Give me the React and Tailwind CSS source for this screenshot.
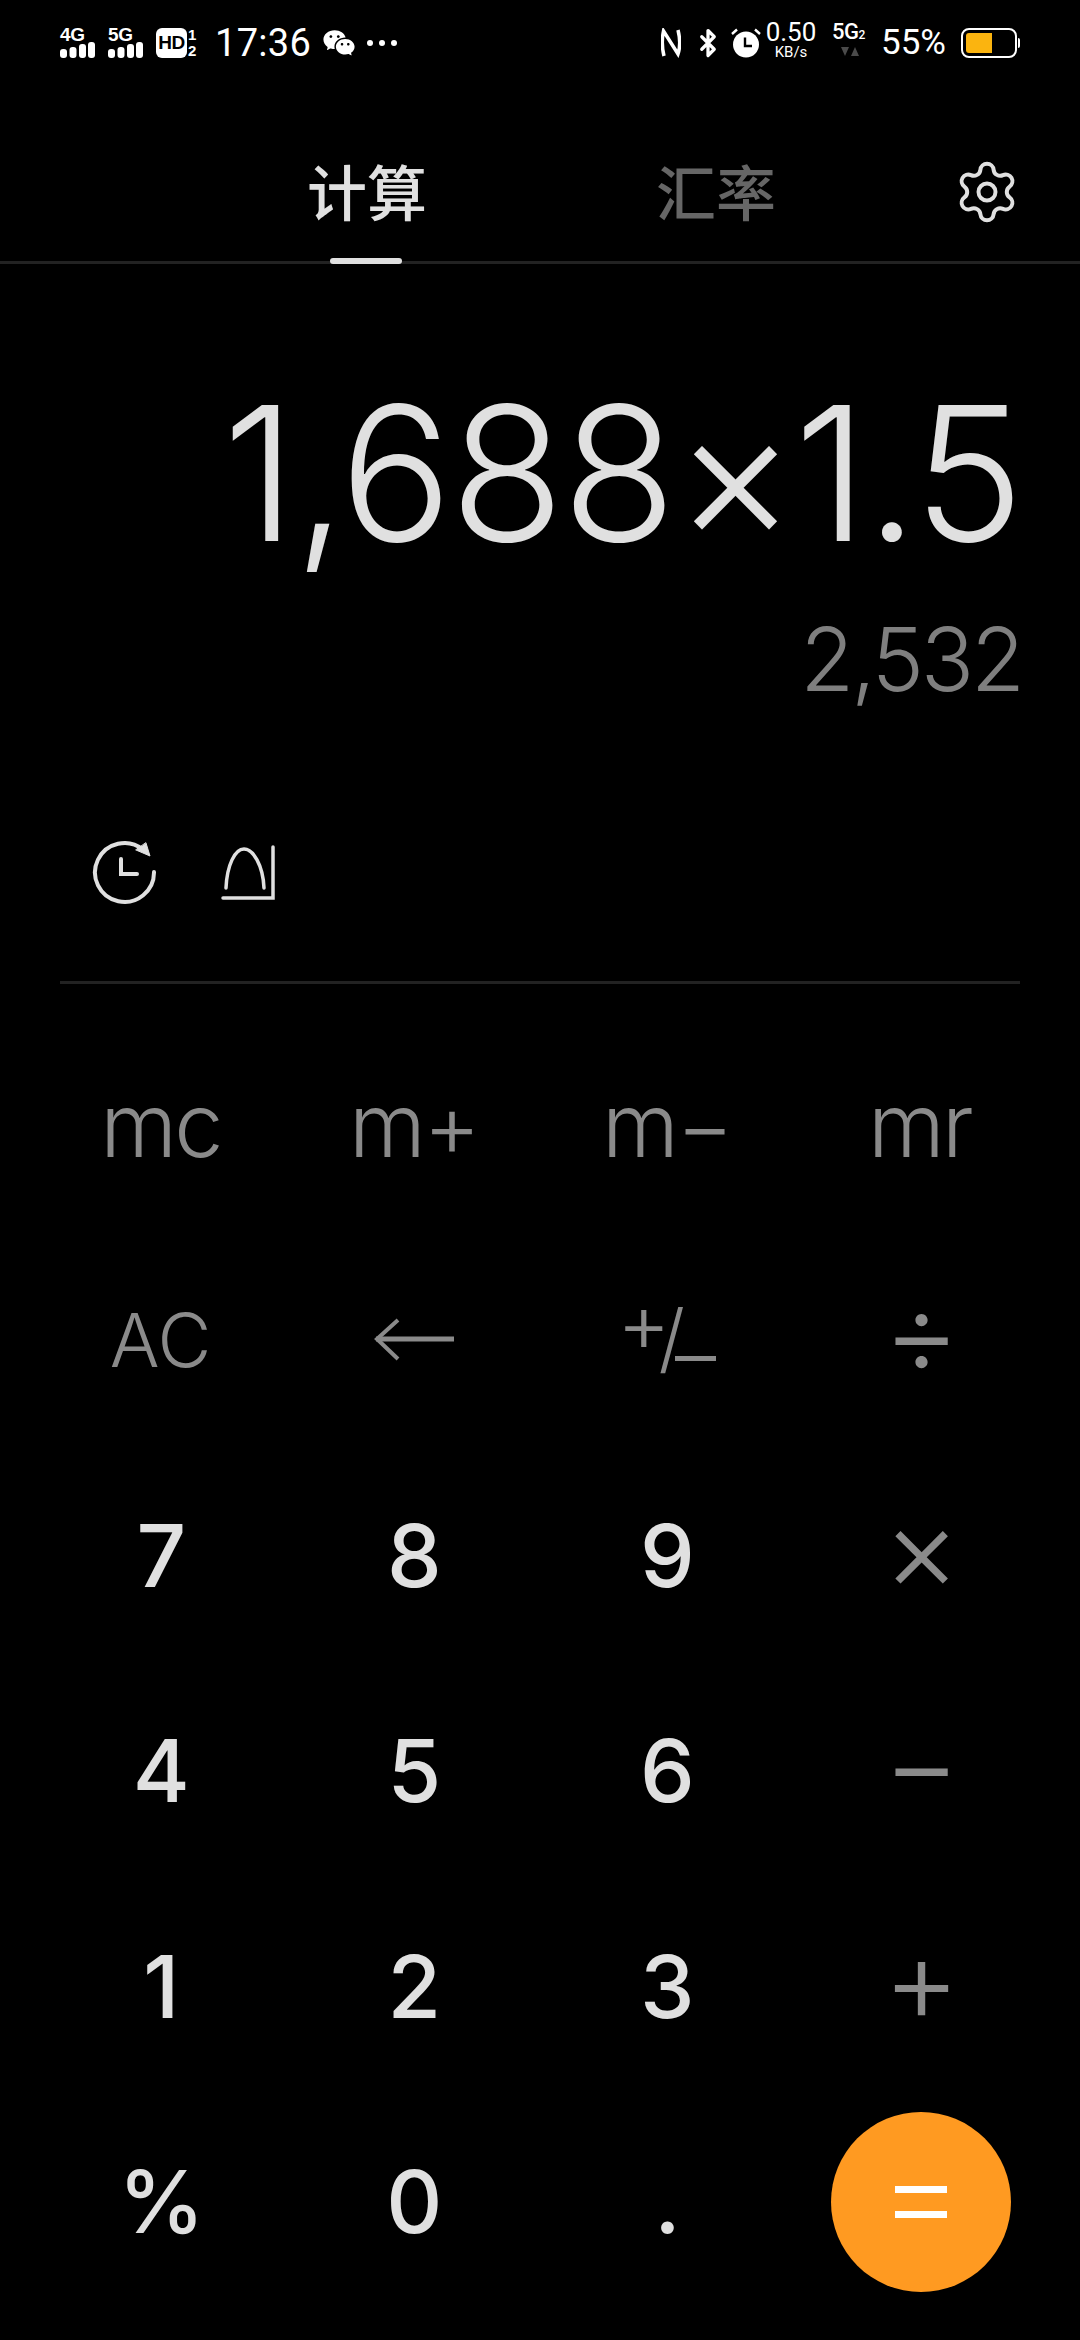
import { Settings, Bluetooth } from "lucide-react";
import { RiWechatFill } from "react-icons/ri";

const SANS = "font-['Inter','Noto_Sans_CJK_SC',sans-serif]";

function Signal({ label }) {
  return (
    <div className="flex flex-col w-[35px] h-[30px] justify-between">
      <span className="font-['Liberation_Sans',sans-serif] font-bold text-[19px] leading-[13px] tracking-[-0.3px] text-white">{label}</span>
      <svg width="35" height="16" viewBox="0 0 35 16" fill="#fff">
        <rect x="0" y="7" width="7" height="9" rx="3" />
        <rect x="9.5" y="5" width="7" height="11" rx="3" />
        <rect x="19" y="2" width="7" height="14" rx="3" />
        <rect x="28" y="0" width="7" height="16" rx="3" />
      </svg>
    </div>
  );
}

function StatusBar() {
  return (
    <div className="flex items-center h-[84px] pl-[60px] pt-[1px] text-white font-['Roboto',sans-serif]">
      <Signal label="4G" />
      <div className="ml-[13px]"><Signal label="5G" /></div>
      <div className="ml-[13px] w-[31px] h-[30px] rounded-[6px] bg-white flex items-center justify-center">
        <span className="font-['Liberation_Sans',sans-serif] font-bold text-[19px] leading-none tracking-[-0.5px] text-black">HD</span>
      </div>
      <div className="ml-[1px] w-[10px] h-[30px] flex flex-col justify-between font-['Liberation_Sans',sans-serif] font-bold text-[15px] leading-[14px]">
        <span>1</span>
        <span>2</span>
      </div>
      <span className="ml-[17px] w-[94px] text-[38px] leading-none font-normal tracking-[0.3px]">17:36</span>
      <RiWechatFill className="ml-[13px] w-[34px] h-[34px]" />
      <div className="ml-[11px] flex gap-[6px]">
        <div className="w-[6px] h-[6px] rounded-full bg-white" />
        <div className="w-[6px] h-[6px] rounded-full bg-white" />
        <div className="w-[6px] h-[6px] rounded-full bg-white" />
      </div>

      <svg className="ml-[264px]" width="20" height="30" viewBox="0 0 20 30" fill="none" stroke="#fff" strokeWidth="3.5">
        <path d="M3 28 C1 20 1 10 2.5 3 L17 26 C19 20 19 10 17 2" />
      </svg>
      <Bluetooth className="ml-[12px] w-[30px] h-[30px]" strokeWidth={2.6} />
      <svg className="ml-[8px]" width="30" height="30" viewBox="0 0 30 30" fill="#fff">
        <circle cx="15" cy="16.5" r="13" />
        <path d="M14 9.5v8.5h7" fill="none" stroke="#000" strokeWidth="2.4" />
        <path d="M1 6 L6 1.5 M29 6 L24 1.5" stroke="#fff" strokeWidth="2.4" />
      </svg>
      <div className="ml-[4px] w-[52px] flex flex-col items-center">
        <span className="text-[26px] leading-[20px] mt-[-4px]">0.50</span>
        <span className="text-[15px] leading-[14px] mt-[3px]">KB/s</span>
      </div>
      <div className="ml-[15px] w-[38px] flex flex-col items-start">
        <span className="text-[22px] leading-[18px] font-medium mt-[-6px] tracking-[-0.5px] whitespace-nowrap">5G<span className="text-[12px]">2</span></span>
        <svg className="ml-[9px] mt-[3px]" width="18" height="10" viewBox="0 0 18 10" fill="#4a4a4a">
          <path d="M0 0h8L4 9zM10 9h8L14 0z" />
        </svg>
      </div>
      <span className="ml-[11px] w-[68px] text-[35px] leading-none whitespace-nowrap">55%</span>
      <div className="ml-[12px] flex items-center">
        <div className="w-[56px] h-[30px] rounded-[8px] border-2 border-white p-[3px]">
          <div className="w-[26px] h-full bg-[#fbb40f] rounded-l-[3px]" />
        </div>
        <div className="ml-[1px] w-[2px] h-[10px] bg-white rounded-r-sm" />
      </div>
    </div>
  );
}

function Tabs() {
  return (
    <div className={`relative h-[180px] border-b-[3px] border-[#222222] ${SANS}`}>
      <div className="flex pl-[307px] pt-[68px]">
        <span className="text-[60px] leading-[84px] font-medium whitespace-nowrap text-[#e0e0e0]">计算</span>
        <span className="ml-[229px] text-[60px] leading-[84px] font-medium whitespace-nowrap text-[#666666]">汇率</span>
        <Settings className="ml-[177px] mt-[6px] w-[68px] h-[68px] text-[#e0e0e0]" strokeWidth={1.4} />
      </div>
      <div className="absolute left-[330px] bottom-[-3px] w-[72px] h-[6px] rounded-full bg-[#e0e0e0]" />
    </div>
  );
}

function Display() {
  return (
    <div className={`flex flex-col items-end pr-[58px] ${SANS}`}>
      <div className="mt-[99px] text-[187px] leading-[220px] font-light tracking-[-0.012em] text-[#e0e0e0] whitespace-nowrap">1,688×1.5</div>
      <div className="mt-[24px] text-[88px] leading-[104px] font-light tracking-[-0.035em] text-[#7f7f7f]">2,532</div>
    </div>
  );
}

function Tools() {
  return (
    <div className="flex items-center mx-[60px] mt-[128px] h-[70px]">
      <svg className="ml-[31px]" width="68" height="68" viewBox="0 0 68 68" fill="none" stroke="#e0e0e0" strokeWidth="4" strokeLinecap="round">
        <path d="M63 32 A29.5 29.5 0 1 1 52 9.5" />
        <path d="M55 3 L59 16 L45 10 Z" fill="#e0e0e0" strokeWidth="1" strokeLinejoin="round" />
        <path d="M30 19 V34 H46" />
      </svg>
      <svg className="ml-[62px]" width="56" height="58" viewBox="0 0 56 58" fill="none" stroke="#e0e0e0" strokeWidth="3.5" strokeLinecap="round">
        <path d="M2 53 H52 V2" />
        <path d="M5 43 C6 20 14 4 23 4 C32 4 42 20 43 43" />
      </svg>
    </div>
  );
}

function ArrowLeft() {
  return (
    <svg width="84" height="44" viewBox="0 0 84 44" fill="none" stroke="#8a8a8a" strokeWidth="5">
      <path d="M4 21 H82" />
      <path d="M26 2 L5 21 L26 41" strokeWidth="4" />
    </svg>
  );
}

function PlusMinus() {
  return (
    <span className="flex items-center text-[#8a8a8a] font-light leading-none">
      <span className="text-[82px] mb-[28px]">+</span>
      <span className="text-[76px] ml-[-12px]">/</span>
      <span className="text-[82px] mt-[36px] ml-[-10px]">–</span>
    </span>
  );
}

function Key({ children, className = "" }) {
  return <div className={`flex items-center justify-center h-[215.5px] ${className}`}>{children}</div>;
}

function Keypad() {
  const memory = "text-[88px] font-light tracking-[-0.03em] text-[#8a8a8a]";
  const op = "text-[118px] font-light leading-none pl-[4px] pb-[16px] text-[#8a8a8a]";
  const digit = "text-[87px] font-[450] tracking-[-0.02em] text-[#e0e0e0]";
  return (
    <div className={`grid grid-cols-4 mx-[34px] w-[1012px] ${SANS}`}>
      <Key className={memory}>mc</Key>
      <Key className={memory}>m+</Key>
      <Key className={memory}>m−</Key>
      <Key className={memory}>mr</Key>
      <Key className="text-[74px] font-light text-[#8a8a8a]">AC</Key>
      <Key><ArrowLeft /></Key>
      <Key className="pb-[6px]"><PlusMinus /></Key>
      <Key className={op}>÷</Key>
      <Key className={digit}>7</Key>
      <Key className={digit}>8</Key>
      <Key className={digit}>9</Key>
      <Key className={op}>×</Key>
      <Key className={digit}>4</Key>
      <Key className={digit}>5</Key>
      <Key className={digit}>6</Key>
      <Key className={op}>−</Key>
      <Key className={digit}>1</Key>
      <Key className={digit}>2</Key>
      <Key className={digit}>3</Key>
      <Key className={op}>+</Key>
      <Key className={digit}>%</Key>
      <Key className={digit}>0</Key>
      <Key className={digit}>.</Key>
      <Key>
        <div className="ml-[3px] w-[180px] h-[180px] rounded-full bg-[#ff9a21] flex flex-col items-center justify-center gap-[18px]">
          <div className="w-[52px] h-[7px] bg-white" />
          <div className="w-[52px] h-[7px] bg-white" />
        </div>
      </Key>
    </div>
  );
}

export default function App() {
  return (
    <div className="w-[1080px] h-[2340px] bg-black overflow-hidden">
      <StatusBar />
      <Tabs />
      <Display />
      <Tools />
      <div className="mx-[60px] mt-[72px] h-[3px] bg-[#222222]" />
      <div className="mt-[33px]"><Keypad /></div>
    </div>
  );
}
